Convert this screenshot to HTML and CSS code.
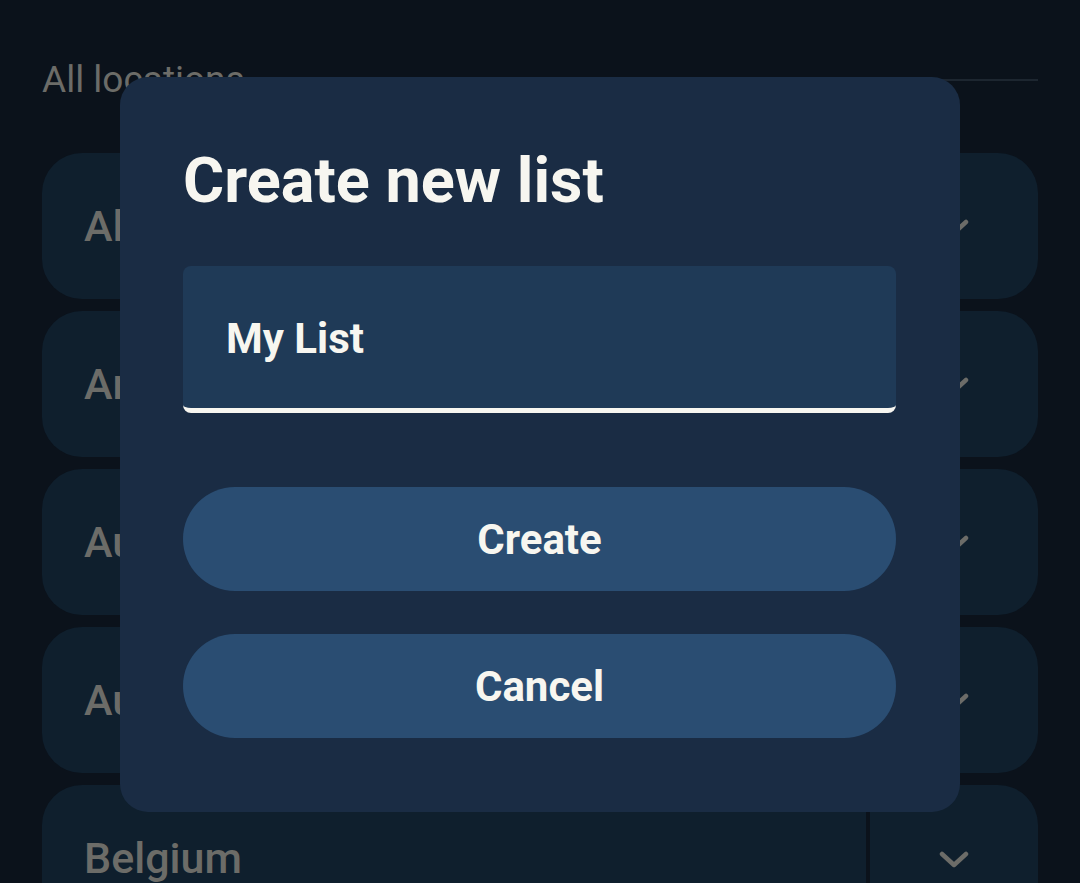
FILE: index.html
```html
<!DOCTYPE html>
<html lang="en">
<head>
<meta charset="utf-8">
<title>Create new list</title>
<link rel="stylesheet" href="styles.css">
</head>
<body>
<div class="screen">
  <div class="header">
    <span class="header-label">All locations</span>
    <span class="header-line"></span>
  </div>
  <div class="rows">
    <div class="row"><div class="row-main">All</div><div class="row-side"><svg class="chev" viewBox="0 0 30 17"><path d="M3 3 L15 14 L27 3"/></svg></div></div>
    <div class="row"><div class="row-main">Argentina</div><div class="row-side"><svg class="chev" viewBox="0 0 30 17"><path d="M3 3 L15 14 L27 3"/></svg></div></div>
    <div class="row"><div class="row-main">Australia</div><div class="row-side"><svg class="chev" viewBox="0 0 30 17"><path d="M3 3 L15 14 L27 3"/></svg></div></div>
    <div class="row"><div class="row-main">Austria</div><div class="row-side"><svg class="chev" viewBox="0 0 30 17"><path d="M3 3 L15 14 L27 3"/></svg></div></div>
    <div class="row"><div class="row-main">Belgium</div><div class="row-side"><svg class="chev" viewBox="0 0 30 17"><path d="M3 3 L15 14 L27 3"/></svg></div></div>
  </div>

  <div class="dialog">
    <h1 class="dialog-title">Create new list</h1>
    <div class="field"><span class="field-text">My List</span></div>
    <div class="actions">
      <button class="btn">Create</button>
      <button class="btn">Cancel</button>
    </div>
  </div>
</div>
</body>
</html>
```

FILE: styles.css
```css
* { box-sizing: border-box; }
html, body {
  margin: 0;
  padding: 0;
  width: 1080px;
  height: 883px;
  overflow: hidden;
  background: #0b121b;
  font-family: Roboto, "Noto Sans", "Liberation Sans", sans-serif;
}
.screen {
  position: relative;
  width: 1080px;
  height: 883px;
  overflow: hidden;
  padding: 58px 42px 0 42px;
}
.header {
  display: flex;
  align-items: center;
  height: 44px;
  gap: 14px;
}
.header-label {
  color: #6c6c68;
  font-size: 37px;
  font-weight: 400;
  line-height: 44px;
}
.header-line {
  flex: 1;
  height: 2px;
  background: #1d2630;
  margin-top: 0;
}
.rows {
  margin-top: 51px;
  display: flex;
  flex-direction: column;
  gap: 12px;
}
.row {
  display: flex;
  flex-shrink: 0;
  height: 146px;
  gap: 4px;
}
.row-main {
  flex: 1;
  background: #0f1f2d;
  border-radius: 40px 0 0 40px;
  display: flex;
  align-items: center;
  padding-left: 42px;
  color: #6c6c68;
  font-size: 43px;
  font-weight: 500;
}
.row-side {
  width: 168px;
  background: #0f1f2d;
  border-radius: 0 40px 40px 0;
  display: flex;
  align-items: center;
  justify-content: center;
}
.chev {
  width: 30px;
  height: 17px;
  margin-top: 2px;
}
.chev path {
  fill: none;
  stroke: #6c6c68;
  stroke-width: 4.5;
  stroke-linecap: round;
  stroke-linejoin: round;
}
.dialog {
  position: absolute;
  left: 120px;
  top: 77px;
  width: 840px;
  height: 735px;
  background: #1a2c44;
  border-radius: 28px;
  padding: 72px 64px 0 63px;
}
.dialog-title {
  margin: 0;
  color: #f7f6f0;
  font-size: 63px;
  font-weight: 700;
  line-height: 64px;
}
.field {
  margin-top: 53px;
  height: 147px;
  background: #1f3a57;
  border-radius: 8px;
  border-bottom: 5px solid #f7f6f0;
  display: flex;
  align-items: center;
  padding-left: 43px;
  padding-top: 2px;
}
.field-text {
  color: #f7f6f0;
  font-size: 42px;
  font-weight: 700;
}
.actions {
  margin-top: 74px;
  display: flex;
  flex-direction: column;
  gap: 43px;
}
.btn {
  height: 104px;
  border: none;
  border-radius: 52px;
  background: #2a4d72;
  color: #f7f6f0;
  font-family: Roboto, "Noto Sans", "Liberation Sans", sans-serif;
  font-size: 42px;
  font-weight: 700;
  padding: 0;
  width: 100%;
}
```
